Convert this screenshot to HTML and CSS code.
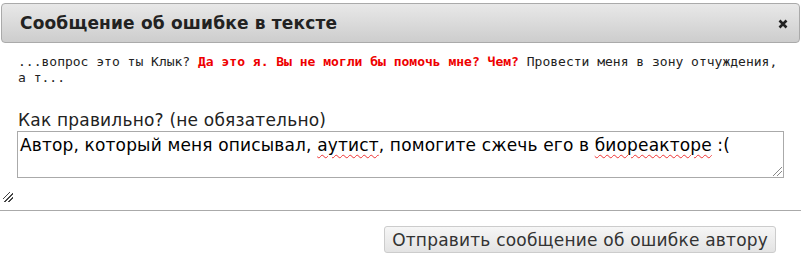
FILE: index.html
```html
<!DOCTYPE html>
<html lang="ru">
<head>
<meta charset="utf-8">
<title>Сообщение об ошибке в тексте</title>
<link rel="stylesheet" href="styles.css">
</head>
<body>
<div class="dialog">
  <div class="titlebar">
    <span class="title">Сообщение об ошибке в тексте</span>
    <svg class="close" width="10" height="10" viewBox="0 0 10 10"><path d="M1.5 1.5 L8.5 8.5 M8.5 1.5 L1.5 8.5" stroke="#222" stroke-width="2.6" stroke-linecap="butt"/></svg>
  </div>
  <div class="content">
    <p class="quote">...вопрос это ты Клык? <b class="err">Да это я. Вы не могли бы помочь мне? Чем?</b> Провести меня в зону отчуждения, а т...</p>
    <label class="label">Как правильно? (не обязательно)</label>
    <div class="field">Автор, который меня описывал, <span class="sp">аутист</span>, помогите сжечь его в <span class="sp">биореакторе</span> :(<span class="grip"></span></div>
  </div>
  <div class="dgrip"></div>
  <div class="buttons">
    <button class="btn">Отправить сообщение об ошибке автору</button>
  </div>
</div>
</body>
</html>
```
FILE: styles.css
```css
html, body {
  margin: 0;
  padding: 0;
  background: #fff;
}
body {
  font-family: "DejaVu Sans", Verdana, sans-serif;
  color: #222;
  width: 801px;
  height: 268px;
  overflow: hidden;
}
.dialog {
  position: relative;
  padding-top: 3px;
}
.titlebar {
  margin: 0 1px;
  height: 38px;
  border: 1px solid #aaa;
  border-radius: 4px;
  background: linear-gradient(#e8e8e8, #cdcdcd);
  display: flex;
  align-items: center;
  justify-content: space-between;
  padding: 0 11px 0 18px;
}
.title {
  font-weight: bold;
  font-size: 17px;
  letter-spacing: 0.18px;
  color: #222;
}
.close {
  display: block;
  margin-top: 1px;
}
.content {
  padding: 0 17px;
}
.quote {
  margin: 11px 0 0 1px;
  font-family: "DejaVu Sans Mono", monospace;
  font-size: 13px;
  line-height: 16px;
  color: #222;
}
.err {
  color: #e00;
  font-weight: bold;
}
.label {
  display: block;
  margin: 24px 0 0 1px;
  font-size: 17px;
  letter-spacing: 0.2px;
  line-height: 20px;
  color: #222;
}
.field {
  position: relative;
  margin-top: 1px;
  width: 761px;
  height: 42px;
  border: 1px solid #aaa;
  padding: 3px 2px 0;
  font-size: 17px;
  letter-spacing: 0.15px;
  line-height: 20px;
  color: #000;
}
.sp {
  text-decoration: underline wavy #e33;
  text-decoration-thickness: 1px;
  text-underline-offset: 3px;
}
.grip {
  position: absolute;
  right: 1px;
  bottom: 1px;
  width: 9px;
  height: 9px;
  background: linear-gradient(135deg, transparent 0 45%, #888 45% 52%, transparent 52% 68%, #888 68% 75%, transparent 75%);
}
.dgrip {
  position: absolute;
  left: 3px;
  top: 192px;
  width: 10px;
  height: 10px;
  background: linear-gradient(135deg, transparent 0 30%, #444 30% 38%, transparent 38% 52%, #444 52% 60%, transparent 60% 74%, #444 74% 82%, transparent 82%);
}
.buttons {
  margin-top: 32px;
  border-top: 1px solid #aaa;
  padding: 15px 25px 0 0;
  display: flex;
  justify-content: flex-end;
}
.btn {
  font-family: "DejaVu Sans", Verdana, sans-serif;
  font-size: 17px;
  letter-spacing: 0.2px;
  color: #333;
  height: 27px;
  padding: 0 7px;
  border: 1px solid #ccc;
  border-radius: 3px;
  background: linear-gradient(#f6f6f6, #e3e3e3);
}
```
